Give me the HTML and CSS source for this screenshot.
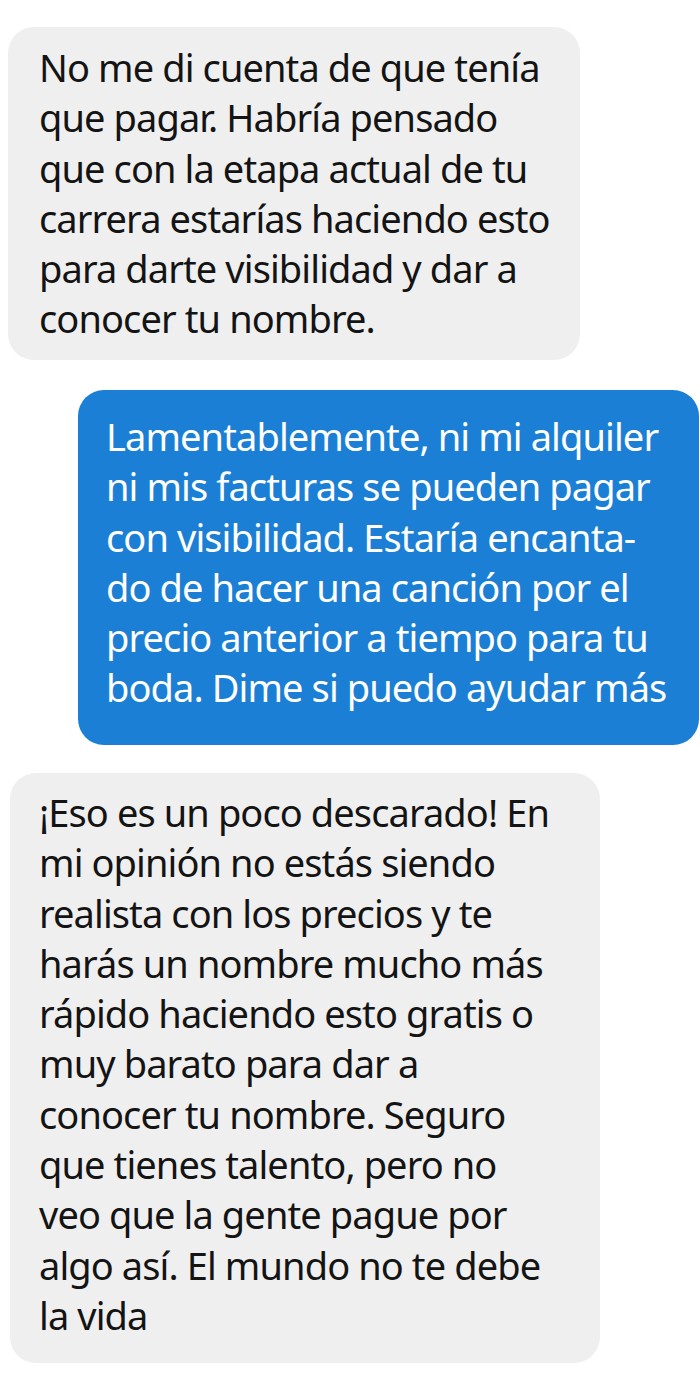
FILE: index.html
```html
<!DOCTYPE html>
<html lang="es">
<head>
<meta charset="utf-8">
<link rel="stylesheet" href="styles.css">
</head>
<body>
<div class="chat">
  <div class="bubble in b1">
    <span class="l">No me di cuenta de que tenía</span>
    <span class="l">que pagar. Habría pensado</span>
    <span class="l">que con la etapa actual de tu</span>
    <span class="l">carrera estarías haciendo esto</span>
    <span class="l">para darte visibilidad y dar a</span>
    <span class="l">conocer tu nombre.</span>
  </div>
  <div class="bubble out b2">
    <span class="l">Lamentablemente, ni mi alquiler</span>
    <span class="l">ni mis facturas se pueden pagar</span>
    <span class="l">con visibilidad. Estaría encanta-</span>
    <span class="l">do de hacer una canción por el</span>
    <span class="l">precio anterior a tiempo para tu</span>
    <span class="l">boda. Dime si puedo ayudar más</span>
  </div>
  <div class="bubble in b3">
    <span class="l">¡Eso es un poco descarado! En</span>
    <span class="l">mi opinión no estás siendo</span>
    <span class="l">realista con los precios y te</span>
    <span class="l">harás un nombre mucho más</span>
    <span class="l">rápido haciendo esto gratis o</span>
    <span class="l">muy barato para dar a</span>
    <span class="l">conocer tu nombre. Seguro</span>
    <span class="l">que tienes talento, pero no</span>
    <span class="l">veo que la gente pague por</span>
    <span class="l">algo así. El mundo no te debe</span>
    <span class="l">la vida</span>
  </div>
</div>
</body>
</html>
```

FILE: styles.css
```css
html, body {
  margin: 0;
  padding: 0;
  background: #ffffff;
}
body {
  width: 700px;
  height: 1383px;
  overflow: hidden;
  font-family: "Noto Sans", "Open Sans", sans-serif;
}
.chat {
  display: flex;
  flex-direction: column;
  padding-top: 27px;
}
.bubble {
  display: flex;
  flex-direction: column;
  border-radius: 26px;
  box-sizing: border-box;
  font-size: 38px;
  line-height: 50.3px;
  letter-spacing: -0.9px;
}
.l {
  display: block;
  white-space: nowrap;
}
.in {
  background: #efefef;
  color: #141414;
}
.out {
  background: #1b7fd5;
  color: #ffffff;
}
.b1 {
  margin-left: 8px;
  width: 572px;
  height: 333px;
  padding: 15px 0 0 31px;
}
.b2 {
  margin-top: 30px;
  margin-left: 78px;
  width: 621px;
  height: 355px;
  padding: 21px 0 0 28px;
}
.b3 {
  margin-top: 28px;
  margin-left: 10px;
  width: 590px;
  height: 590px;
  padding: 14px 0 0 29px;
}
```
